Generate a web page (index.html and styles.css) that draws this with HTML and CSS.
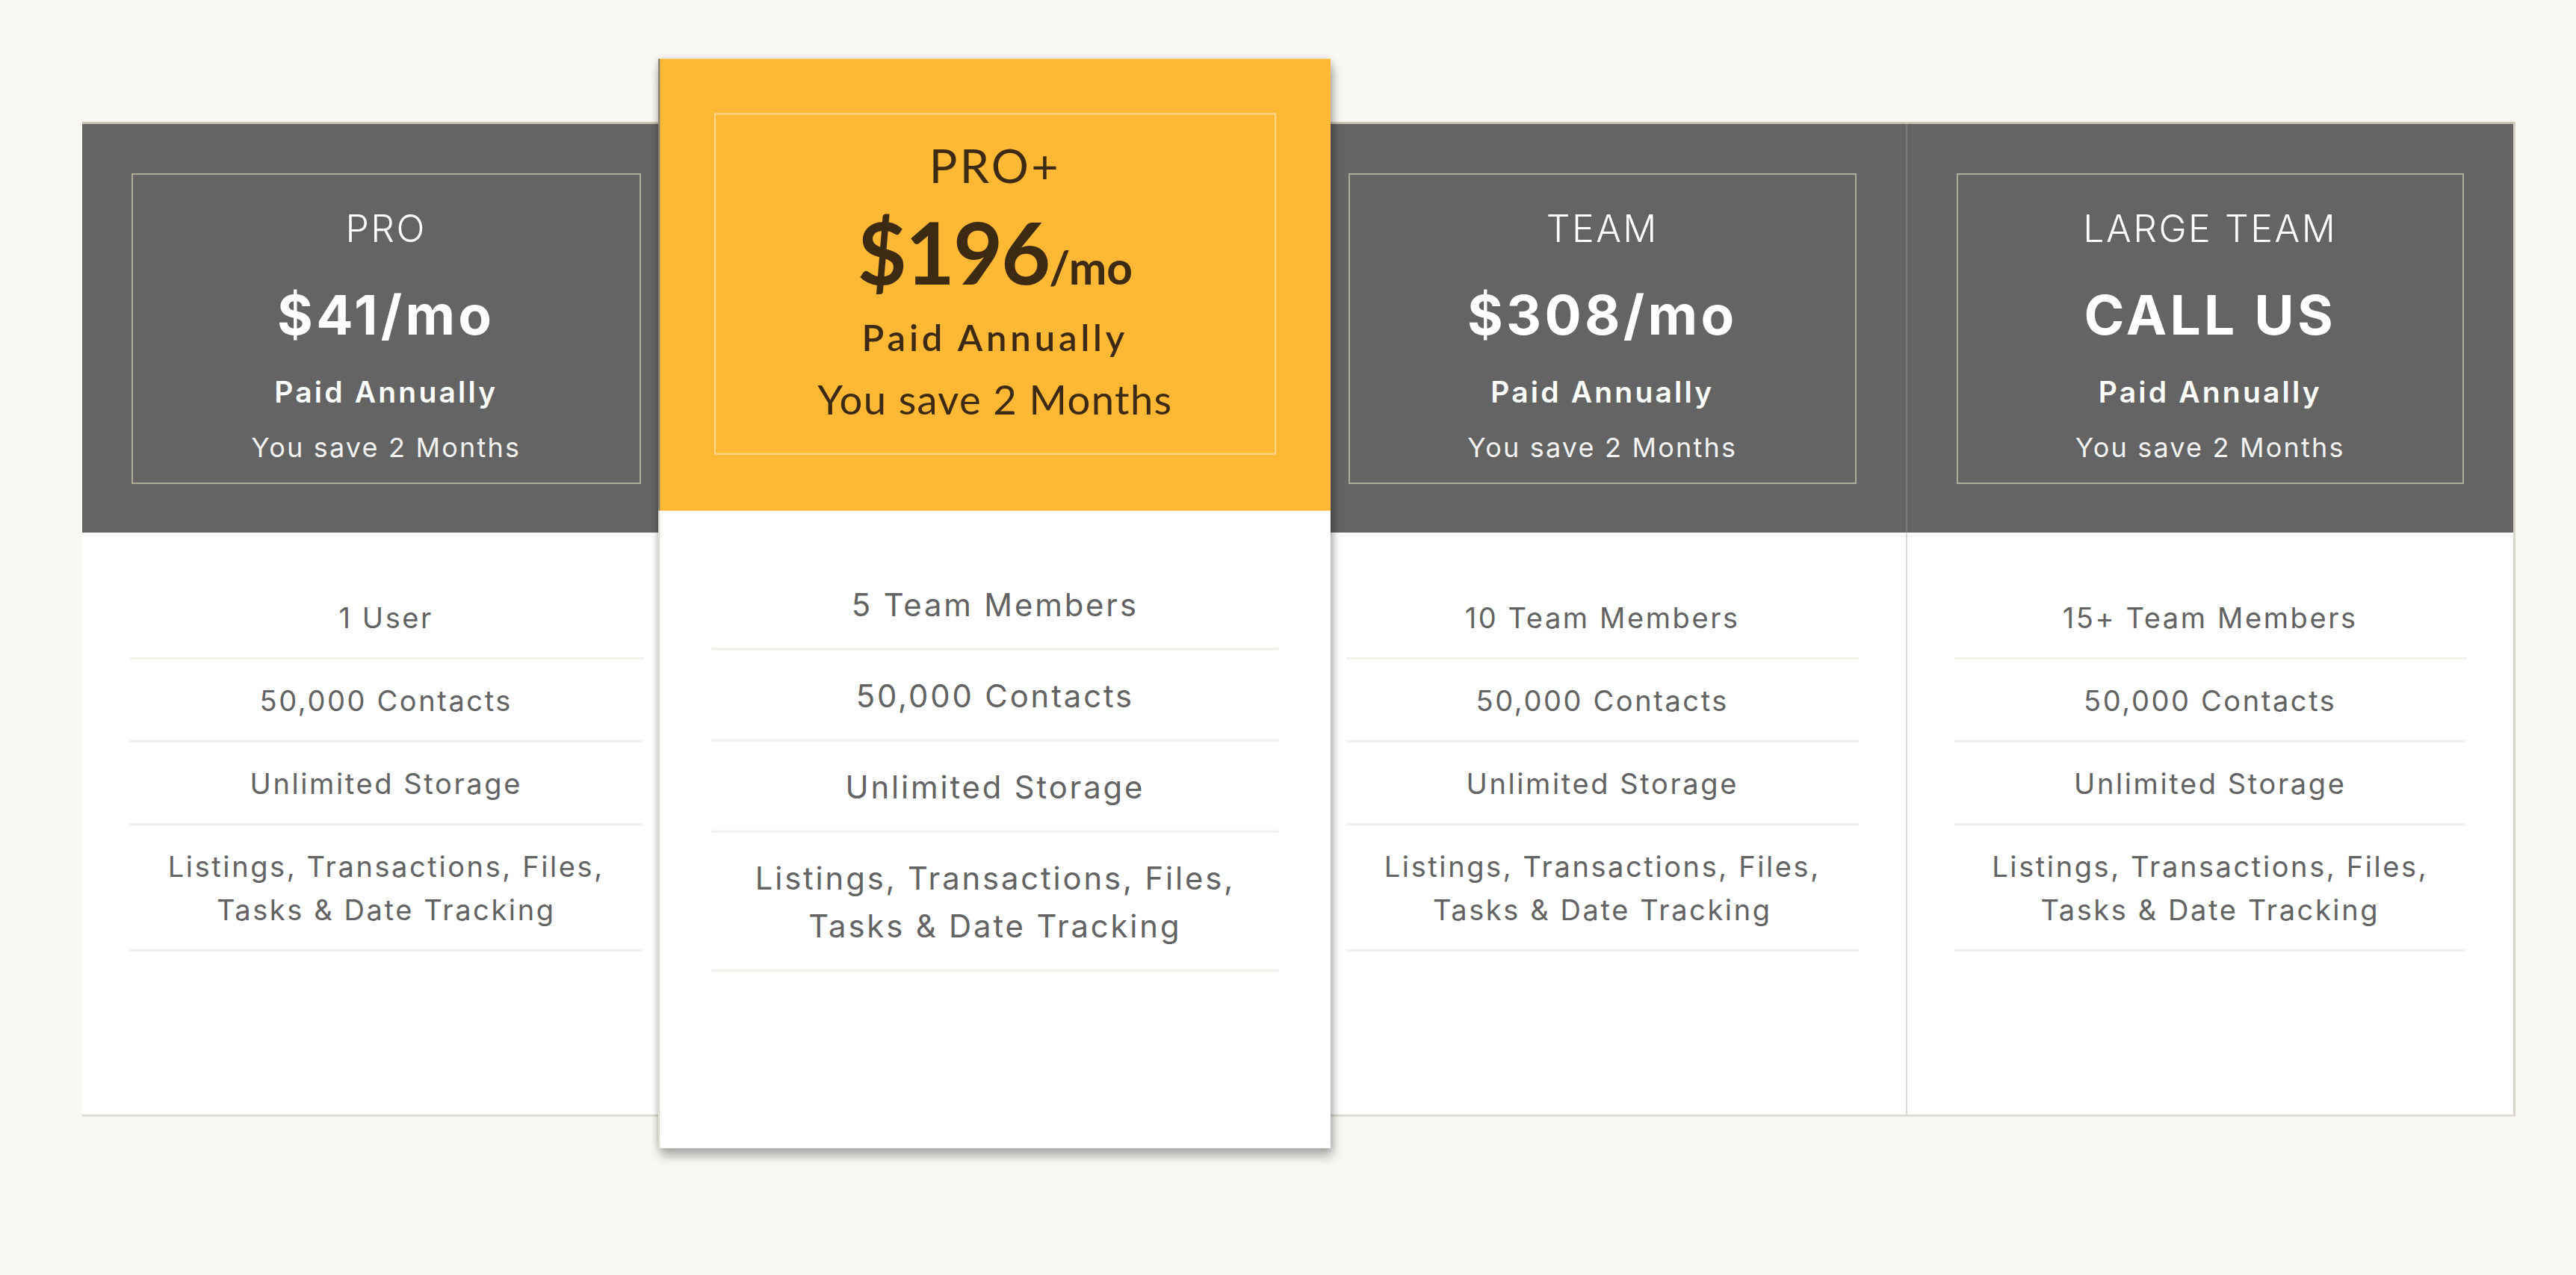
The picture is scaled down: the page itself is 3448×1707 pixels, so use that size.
FILE: index.html
```html
<!DOCTYPE html>
<html lang="en">
<head>
<meta charset="utf-8">
<title>Pricing</title>
<link rel="stylesheet" href="styles.css">
</head>
<body>
<div class="page">
  <div class="pricing">
    <div class="plan">
      <div class="plan-head">
        <div class="plan-box">
          <div class="plan-name">PRO</div>
          <div class="plan-price">$41/mo</div>
          <div class="plan-billing">Paid Annually</div>
          <div class="plan-save">You save 2 Months</div>
        </div>
      </div>
      <ul class="plan-features">
        <li>1 User</li>
        <li>50,000 Contacts</li>
        <li>Unlimited Storage</li>
        <li>Listings, Transactions, Files,<br>Tasks &amp; Date Tracking</li>
      </ul>
    </div>
    <div class="plan plan--featured">
      <div class="plan-head">
        <div class="plan-box">
          <div class="plan-name">PRO+</div>
          <div class="plan-price">$196<span class="plan-per">/mo</span></div>
          <div class="plan-billing">Paid Annually</div>
          <div class="plan-save">You save 2 Months</div>
        </div>
      </div>
      <ul class="plan-features">
        <li>5 Team Members</li>
        <li>50,000 Contacts</li>
        <li>Unlimited Storage</li>
        <li>Listings, Transactions, Files,<br>Tasks &amp; Date Tracking</li>
      </ul>
    </div>
    <div class="plan">
      <div class="plan-head">
        <div class="plan-box">
          <div class="plan-name">TEAM</div>
          <div class="plan-price">$308/mo</div>
          <div class="plan-billing">Paid Annually</div>
          <div class="plan-save">You save 2 Months</div>
        </div>
      </div>
      <ul class="plan-features">
        <li>10 Team Members</li>
        <li>50,000 Contacts</li>
        <li>Unlimited Storage</li>
        <li>Listings, Transactions, Files,<br>Tasks &amp; Date Tracking</li>
      </ul>
    </div>
    <div class="plan">
      <div class="plan-head">
        <div class="plan-box">
          <div class="plan-name">LARGE TEAM</div>
          <div class="plan-price">CALL US</div>
          <div class="plan-billing">Paid Annually</div>
          <div class="plan-save">You save 2 Months</div>
        </div>
      </div>
      <ul class="plan-features">
        <li>15+ Team Members</li>
        <li>50,000 Contacts</li>
        <li>Unlimited Storage</li>
        <li>Listings, Transactions, Files,<br>Tasks &amp; Date Tracking</li>
      </ul>
    </div>
  </div>
</div>
</body>
</html>
```
FILE: styles.css
```css
html, body {
  margin: 0;
  padding: 0;
}
body {
  background: #f9f8f4;
  font-family: Inter, "Open Sans", sans-serif;
  min-height: 1707px;
}
.page {
  padding: 163px 0 0 110px;
}
.pricing {
  width: 3254px;
  display: grid;
  grid-template-columns: repeat(4, 1fr);
  border-top: 3px solid #c9c6b4;
  border-bottom: 3px solid #dfddd3;
  border-right: 3px solid #d7d4c5;
  background: #fff;
}
.plan {
  display: flex;
  flex-direction: column;
  background: #fff;
}
.plan + .plan .plan-head {
  border-left: 2px solid #7b7b77;
}
.plan + .plan .plan-features {
  border-left: 2px solid #dddbd1;
}
.plan-head {
  background: #646464;
  padding: 66px 66px 65px;
}
.plan-box {
  border: 2px solid #aeab97;
  padding: 42px 0 25px;
  text-align: center;
  color: #fff;
}
.plan-name {
  font-weight: 300;
  font-size: 50px;
  line-height: 60px;
  letter-spacing: 2.5px;
}
.plan-price {
  font-weight: 700;
  font-size: 73px;
  line-height: 80px;
  margin-top: 46px;
  letter-spacing: 4.3px;
}
.plan-billing {
  font-weight: 600;
  font-size: 39px;
  line-height: 48px;
  margin-top: 39px;
  letter-spacing: 3.2px;
}
.plan-save {
  font-weight: 400;
  font-size: 36px;
  line-height: 44px;
  margin-top: 28px;
  letter-spacing: 2.2px;
  color: #f3f3f3;
}
.plan-features {
  list-style: none;
  margin: 0;
  padding: 59px 0 215px;
  flex: 1;
  text-align: center;
  color: #636363;
  font-size: 38px;
  line-height: 58px;
  font-weight: 400;
  letter-spacing: 2.6px;
}
.plan-features li {
  margin: 0 63px;
  padding: 26px 0 24px;
  border-bottom: 3px solid #f1f0eb;
}

/* featured plan */
.plan--featured {
  position: relative;
  z-index: 2;
  margin: 0 -2px;
  transform: translateY(-21px) scale(1.1);
  box-shadow: 0 0 8px rgba(0, 0, 0, 0.18), 3px 10px 12px rgba(0, 0, 0, 0.3);
}
.plan--featured .plan-head {
  background: #ffb833;
  padding: 66px 66px 68px;
  border-left: 0;
}
.plan--featured .plan-features {
  border-left: 0;
}
.plan--featured .plan-box {
  border-color: #ffd787;
  color: #3d2a12;
  font-family: Lato, "Open Sans", sans-serif;
  padding: 27px 0 36px;
}
.plan--featured .plan-name {
  font-weight: 400;
  font-size: 57px;
  line-height: 68px;
  letter-spacing: 3px;
}
.plan--featured .plan-price {
  font-weight: 700;
  font-size: 104px;
  line-height: 110px;
  margin-top: 17px;
  letter-spacing: -2px;
}
.plan-per {
  font-size: 55px;
  line-height: 1;
  letter-spacing: 0;
}
.plan--featured .plan-billing {
  font-weight: 600;
  font-size: 44.5px;
  line-height: 54px;
  margin-top: 22px;
  letter-spacing: 4.4px;
}
.plan--featured .plan-save {
  font-weight: 400;
  font-size: 49.5px;
  line-height: 60px;
  margin-top: 18px;
  letter-spacing: 1.2px;
  color: #3d2a12;
}
```
